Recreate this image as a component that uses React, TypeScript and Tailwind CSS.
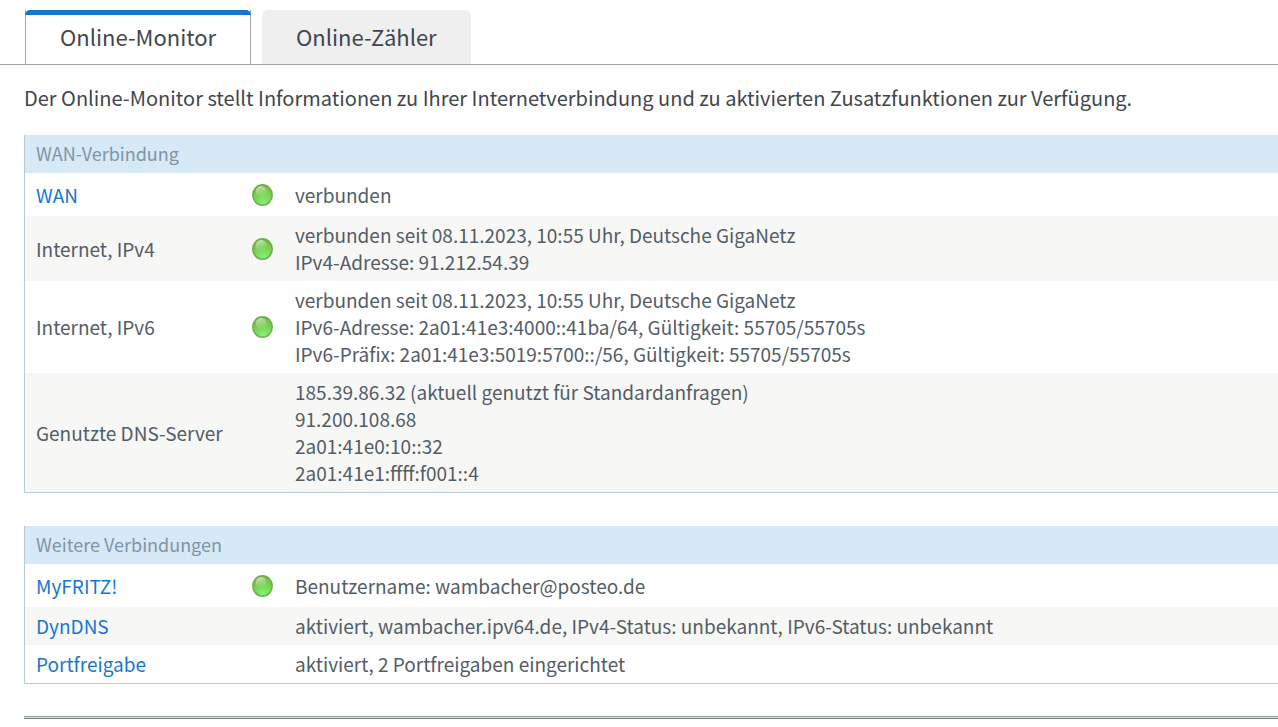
import { Fragment, ReactNode } from "react";

type Row = {
  label: string;
  href?: string;
  online?: boolean;
  lines: string[];
};

const wanRows: Row[] = [
  { label: "WAN", href: "#wan", online: true, lines: ["verbunden"] },
  {
    label: "Internet, IPv4",
    online: true,
    lines: [
      "verbunden seit 08.11.2023, 10:55 Uhr, Deutsche GigaNetz",
      "IPv4-Adresse: 91.212.54.39",
    ],
  },
  {
    label: "Internet, IPv6",
    online: true,
    lines: [
      "verbunden seit 08.11.2023, 10:55 Uhr, Deutsche GigaNetz",
      "IPv6-Adresse: 2a01:41e3:4000::41ba/64, Gültigkeit: 55705/55705s",
      "IPv6-Präfix: 2a01:41e3:5019:5700::/56, Gültigkeit: 55705/55705s",
    ],
  },
  {
    label: "Genutzte DNS-Server",
    lines: [
      "185.39.86.32 (aktuell genutzt für Standardanfragen)",
      "91.200.108.68",
      "2a01:41e0:10::32",
      "2a01:41e1:ffff:f001::4",
    ],
  },
];

const otherRows: Row[] = [
  {
    label: "MyFRITZ!",
    href: "#myfritz",
    online: true,
    lines: ["Benutzername: wambacher@posteo.de"],
  },
  {
    label: "DynDNS",
    href: "#dyndns",
    lines: ["aktiviert, wambacher.ipv64.de, IPv4-Status: unbekannt, IPv6-Status: unbekannt"],
  },
  {
    label: "Portfreigabe",
    href: "#portfreigabe",
    lines: ["aktiviert, 2 Portfreigaben eingerichtet"],
  },
];

function Led() {
  return (
    <svg className="mx-auto block h-[22px] w-[21px]" viewBox="0 0 21 22" role="img" aria-label="aktiv">
      <defs>
        <radialGradient id="led-body" cx="0.55" cy="0.9" r="0.85">
          <stop offset="0" stopColor="#80f27c" />
          <stop offset="0.5" stopColor="#79d856" />
          <stop offset="1" stopColor="#72b944" />
        </radialGradient>
        <linearGradient id="led-shine" x1="0.3" y1="0" x2="0.6" y2="1">
          <stop offset="0" stopColor="#d3e5c8" stopOpacity="0.9" />
          <stop offset="1" stopColor="#a5d67f" stopOpacity="0.15" />
        </linearGradient>
      </defs>
      <ellipse cx="10.5" cy="11" rx="9.7" ry="10.2" fill="url(#led-body)" stroke="#72ab50" strokeWidth="1.6" />
      <ellipse cx="9.2" cy="7.4" rx="5.4" ry="5.4" fill="url(#led-shine)" />
    </svg>
  );
}

function Tab({ active, children }: { active?: boolean; children: ReactNode }) {
  return (
    <button
      type="button"
      role="tab"
      aria-selected={!!active}
      className={
        active
          ? "relative h-[54px] border-x border-[#a5a8ab] bg-white px-[34px] pb-0.5 text-[22px] leading-[30px]"
          : "h-[54px] rounded-t-md bg-[#efefef] px-[34px] pb-0.5 text-[22px] leading-[30px]"
      }
    >
      {active && <span className="absolute -inset-x-px top-0 h-[5px] rounded-t-md bg-[#1677d2]" />}
      {children}
    </button>
  );
}

function ConnectionTable({ title, rows }: { title: string; rows: Row[] }) {
  return (
    <table className="w-full table-fixed border-separate border-spacing-0 border-b border-l border-[#b8cbd4] text-left text-[19px] leading-[27px] text-[#535d66]">
      <colgroup>
        <col className="w-[216px]" />
        <col className="w-[43px]" />
        <col />
      </colgroup>
      <thead>
        <tr className="bg-[#d7e8f6]">
          <th colSpan={3} className="px-[11px] pt-[5px] pb-[6px] text-[18px] font-normal text-[#7f95a5]">
            {title}
          </th>
        </tr>
      </thead>
      <tbody>
        {rows.map((row) => (
          <tr key={row.label} className="even:bg-[#f7f7f5]">
            <th scope="row" className="px-[11px] pt-[5px] pb-[6px] font-normal whitespace-nowrap">
              {row.href ? (
                <a href={row.href} className="text-[#1677d2]">
                  {row.label}
                </a>
              ) : (
                row.label
              )}
            </th>
            <td className={row.online ? "h-[43px]" : ""}>{row.online && <Led />}</td>
            <td className="px-[11px] pt-[5px] pb-[6px]">
              {row.lines.map((line, i) => (
                <Fragment key={line}>
                  {i > 0 && <br />}
                  {line}
                </Fragment>
              ))}
            </td>
          </tr>
        ))}
      </tbody>
    </table>
  );
}

export default function App() {
  return (
    <div className="min-h-screen bg-white font-['Noto_Sans_CJK_SC','Noto_Sans',sans-serif] text-[#3f464d]">
      {/* Tabs */}
      <div role="tablist" className="flex gap-[11px] border-b border-[#a5a8ab] pt-2.5 pl-[25px]">
        <Tab active>Online-Monitor</Tab>
        <Tab>Online-Zähler</Tab>
      </div>

      <main className="pl-6">
        <p className="pt-[19px] pb-6 text-[20px] leading-[27px]">
          Der Online-Monitor stellt Informationen zu Ihrer Internetverbindung und zu aktivierten
          Zusatzfunktionen zur Verfügung.
        </p>
        <div className="flex flex-col gap-[33px]">
          <ConnectionTable title="WAN-Verbindung" rows={wanRows} />
          <ConnectionTable title="Weitere Verbindungen" rows={otherRows} />
        </div>
        <hr className="mt-8 h-[3px] border-t border-b border-t-[#8fa9a4] border-b-[#7e7e80] bg-[#d5dedb]" />
      </main>
    </div>
  );
}
